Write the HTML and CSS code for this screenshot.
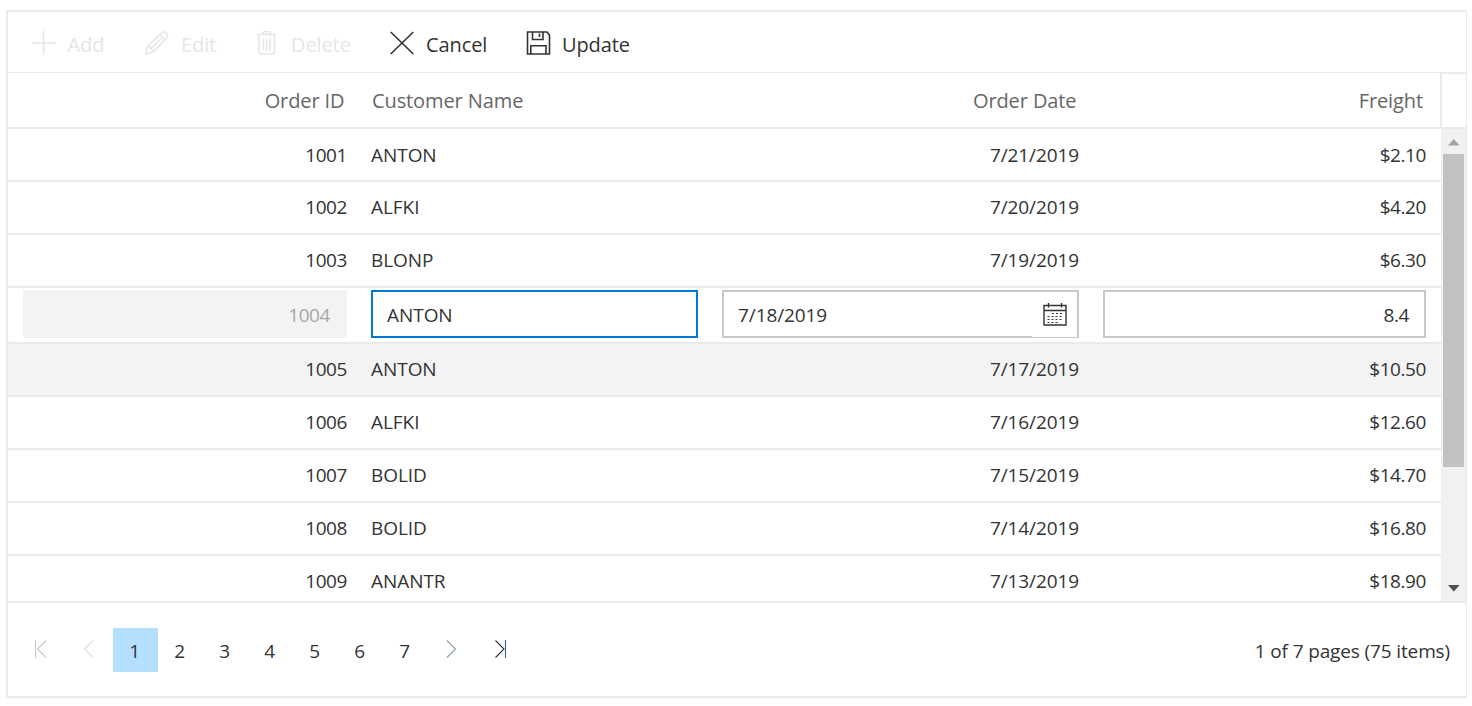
FILE: index.html
```html
<!DOCTYPE html>
<html lang="en">
<head>
<meta charset="utf-8">
<title>Orders</title>
<link rel="stylesheet" href="styles.css">
</head>
<body>
<div class="grid">
  <div class="toolbar">
    <div class="tool add disabled"><svg class="icon" viewBox="0 0 24 24"><path d="M11.500 0v24M0 12h24"/></svg><span>Add</span></div>
    <div class="tool edit disabled"><svg class="icon" viewBox="0 0 24 24"><path d="M1 23l1.500-7.500L17 1.800q2-1.800 4.300.3 2.400 2.400.6 4.500L8 21zM2.500 15.500q4.500.5 5.500 5.500M15 3.800l5 5M17.500 6.300L5.500 18.200"/></svg><span>Edit</span></div>
    <div class="tool delete disabled"><svg class="icon" viewBox="0 0 24 24"><path d="M0 3.500h19.500M2 3.500v18q0 1.500 1.500 1.500h12.500q1.500 0 1.500-1.500v-18M6 3V2q0-1.200 1.200-1.200h5q1.200 0 1.200 1.200v1M6.500 7.500v12M9.800 7.500v12M13 7.500v12"/></svg><span>Delete</span></div>
    <div class="tool cancel"><svg class="icon" viewBox="0 0 24 24"><path d="M.7 1l22.600 22M23.300 1L.7 23"/></svg><span>Cancel</span></div>
    <div class="tool update"><svg class="icon" viewBox="0 0 24 24"><path d="M1.500 1h19.500l2.500 3v19H1.500zM6.500 1v7.500h10.500V1M13.500 2.500v3.500M4.800 23V14.700h15.200V23"/></svg><span>Update</span></div>
  </div>
  <div class="header">
    <div class="row-cells">
      <div class="num">Order ID</div><div>Customer Name</div><div class="num">Order Date</div><div class="num">Freight</div>
    </div>
    <div class="header-gap"></div>
  </div>
  <div class="content">
    <div class="rows">
      <div class="row row-cells"><div class="num">1001</div><div class="name">ANTON</div><div class="num when">7/21/2019</div><div class="num">$2.10</div></div>
      <div class="row row-cells"><div class="num">1002</div><div class="name">ALFKI</div><div class="num when">7/20/2019</div><div class="num">$4.20</div></div>
      <div class="row row-cells"><div class="num">1003</div><div class="name">BLONP</div><div class="num when">7/19/2019</div><div class="num">$6.30</div></div>
      <div class="row row-cells editing">
        <div><div class="field locked num">1004</div></div>
        <div class="name"><div class="field focused">ANTON</div></div>
        <div class="when"><div class="field date"><span>7/18/2019</span><span class="picker"><svg class="cal" viewBox="0 0 24 23"><path d="M1 2.500h22v19.500H1zM1 7.500h22M5.500 0v4.500M18.500 0v4.500"/><path class="dots" d="M9 10.500h12M4.500 13.500h16M4.500 16.500h16M4.500 19.500h12"/></svg></span></div></div>
        <div><div class="field num">8.4</div></div>
      </div>
      <div class="row row-cells hover"><div class="num">1005</div><div class="name">ANTON</div><div class="num when">7/17/2019</div><div class="num">$10.50</div></div>
      <div class="row row-cells"><div class="num">1006</div><div class="name">ALFKI</div><div class="num when">7/16/2019</div><div class="num">$12.60</div></div>
      <div class="row row-cells"><div class="num">1007</div><div class="name">BOLID</div><div class="num when">7/15/2019</div><div class="num">$14.70</div></div>
      <div class="row row-cells"><div class="num">1008</div><div class="name">BOLID</div><div class="num when">7/14/2019</div><div class="num">$16.80</div></div>
      <div class="row row-cells"><div class="num">1009</div><div class="name">ANANTR</div><div class="num when">7/13/2019</div><div class="num">$18.90</div></div>
    </div>
    <div class="scrollbar">
      <svg class="arrow" viewBox="0 0 25 25"><path fill="#a3a3a3" d="M7 16.500l5.800-6.500 5.800 6.500z"/></svg>
      <div class="thumb"></div>
      <svg class="arrow down" viewBox="0 0 25 25"><path fill="#505050" d="M7 9l5.800 6.500L18.600 9z"/></svg>
    </div>
  </div>
  <div class="pager">
    <div class="nav first"><svg viewBox="0 0 20 20"><path d="M2.500 1v18M13 1.500L4.500 10l8.500 8.500"/></svg></div>
    <div class="nav prev"><svg viewBox="0 0 20 20"><path d="M10 1.500L1.500 10l8.500 8.500"/></svg></div>
    <div class="pages">
      <div class="page current">1</div><div class="page">2</div><div class="page">3</div><div class="page">4</div><div class="page">5</div><div class="page">6</div><div class="page">7</div>
    </div>
    <div class="nav next"><svg viewBox="0 0 20 20"><path d="M1 1.500L9.500 10 1 18.500"/></svg></div>
    <div class="nav last"><svg viewBox="0 0 20 20"><path d="M1.500 1.500L10 10l-8.500 8.500"/><path class="bar" d="M11.500 1v18"/></svg></div>
    <div class="summary">1 of 7 pages (75 items)</div>
  </div>
</div>
</body>
</html>
```
FILE: styles.css
```css
* { box-sizing: border-box; }
body { margin: 0; background: #fff; font-family: "Open Sans", "Noto Sans", sans-serif; font-size: 19px; letter-spacing: -0.42px; color: #333; white-space: nowrap; }
svg { display: block; fill: none; stroke: currentColor; overflow: visible; }
.grid { margin: 10px 0 0 6px; width: 1461px; height: 688px; border: 2px solid #eaeaea; border-right-width: 1px; display: flex; flex-direction: column; }
.toolbar { height: 61px; flex: none; border-bottom: 1px solid #eaeaea; display: flex; align-items: center; padding: 3px 0 0 24px; font-size: 20px; letter-spacing: -0.1px; }
.tool { display: flex; align-items: center; height: 30px; }
.tool span { padding-top: 1px; }
.icon { width: 24px; height: 24px; stroke-width: 1.6; margin-top: -2px; }
.disabled { color: #e6e6e6; }
.add { width: 113px; gap: 11.5px; }
.edit { width: 112px; gap: 12px; }
.delete { width: 133px; gap: 10px; }
.cancel { width: 136px; gap: 12px; }
.update { gap: 12px; }
.header { height: 56px; flex: none; display: flex; border-bottom: 2px solid #eaeaea; color: #666; font-size: 20px; letter-spacing: -0.1px; }
.row-cells { width: 1433px; display: grid; grid-template-columns: 351px 351px 381px 350px; align-items: center; }
.row-cells > div { padding: 0 12px; }
.row-cells > div:first-child { padding-left: 15px; }
.row-cells > div:last-child { padding-right: 15px; }
.num { text-align: right; }
.name { letter-spacing: -0.05px; }
.when { letter-spacing: -0.1px; }
.header .row-cells { border-right: 2px solid #eaeaea; width: 1434px; }
.header .row-cells > div { padding: 0 14.5px 0 13px; }
.header .row-cells > div:last-child { padding-right: 18px; }
.header-gap { flex: 1; border-top: 1px solid #eaeaea; }
.content { height: 472px; flex: none; display: flex; }
.rows { width: 1433px; height: 472px; overflow: hidden; }
.row { height: 53px; border-bottom: 2px solid #eaeaea; padding-bottom: 2px; }
.row:first-child { padding-bottom: 0; }
.editing { height: 56px; align-items: start; padding: 2px 0 0; }
.hover { background: #f3f3f3; }
.field { height: 48px; line-height: 46px; border: 2px solid #c8c8c8; padding: 0 15px 0 14px; }
.locked { background: #f3f3f3; border-color: #f3f3f3; color: #a6a6a6; }
.focused { border-color: #0078d6; }
.date { display: flex; justify-content: space-between; padding-right: 0; }
.picker { width: 45px; height: 45px; background: #fff; padding: 11px 0 0 10.500px; }
.cal { width: 24px; height: 23px; stroke-width: 1.4; }
.dots { stroke-dasharray: 2 2; stroke-width: 1.2; }
.scrollbar { width: 25px; background: #f1f1f1; display: flex; flex-direction: column; }
.arrow { width: 25px; height: 25px; stroke: none; }
.thumb { width: 21px; height: 313px; margin-left: 2px; background: #c1c1c1; }
.down { margin-top: auto; }
.pager { flex: 1; border-top: 2px solid #eaeaea; display: flex; align-items: center; padding: 1px 16px 0 0; }
.pages { display: flex; margin-right: 18px; }
.page { width: 45px; height: 44px; line-height: 46px; text-align: center; padding-right: 2px; }
.current { background: #b5dfff; }
.nav svg { width: 20px; height: 20px; stroke-width: 1.1; margin-top: -3px; }
.first { margin-left: 25px; color: #c8c8c8; width: 50px; }
.prev { width: 30px; color: #dedede; }
.next { width: 48px; color: #8c9cac; }
.bar { stroke: #2b5f9e; }
.summary { margin-left: auto; padding-top: 2px; letter-spacing: -0.13px; }
```
